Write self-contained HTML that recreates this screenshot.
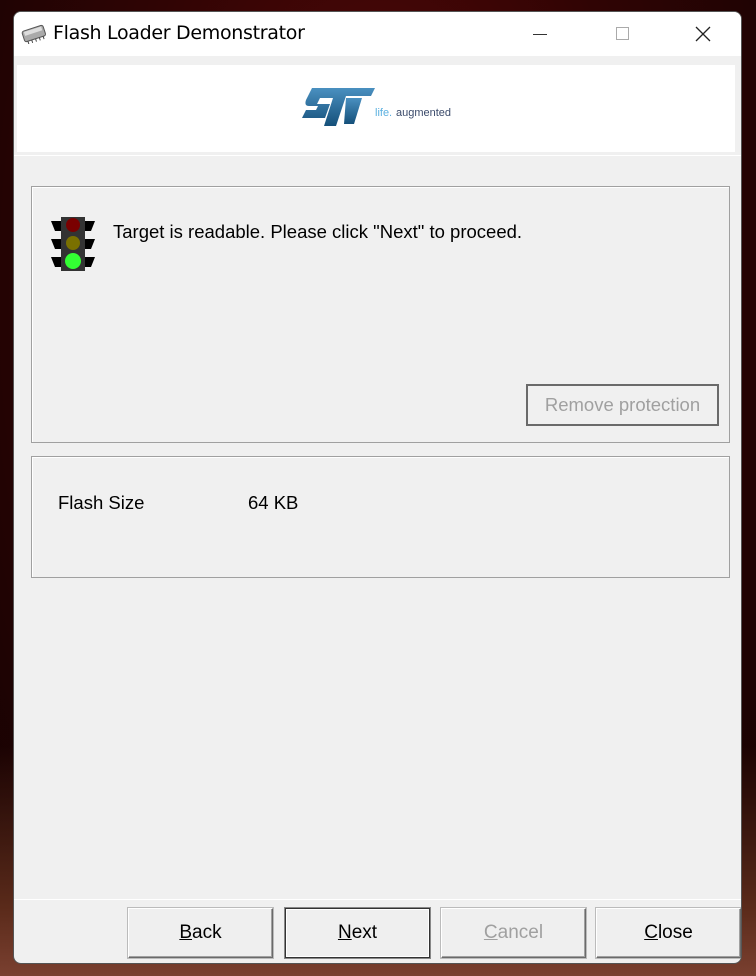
<!DOCTYPE html>
<html><head><style>
*{margin:0;padding:0;box-sizing:border-box}
body{width:756px;height:976px;overflow:hidden;position:relative;font-family:"Liberation Sans",Arial,sans-serif;
background:radial-gradient(ellipse at 50% 30%,#5a0808 0%,#300404 50%,#120202 100%);}
.bgb{position:absolute;left:0;right:0;bottom:0;height:230px;background:linear-gradient(180deg,rgba(0,0,0,0),#5a2a1a 70%,#7a4030)}
.win{position:absolute;left:13px;top:11px;width:729px;height:953px;background:#f0f0f0;border-radius:8px;border:1px solid #555;overflow:hidden}
.title{height:44px;background:#fff;position:relative;font-family:"DejaVu Sans",sans-serif;font-size:19px;color:#000}
.title span{position:absolute;left:39px;top:10px;letter-spacing:-0.3px}
.logo{position:absolute;left:3px;top:53px;width:718px;height:87px;background:#fff}
.sep{position:absolute;left:0;right:0;height:1px;background:#a0a0a0;border-bottom:1px solid #fff}
.panel{position:absolute;left:17px;width:699px;border:1px solid #a0a0a0;box-shadow:inset 1px 1px 0 #fff}
.t{position:absolute;font-size:18.5px;color:#000}
.btn{position:absolute;top:896px;width:145px;height:50px;background:#efefef;border:1px solid #fff;border-right-color:#6a6a6a;border-bottom-color:#6a6a6a;box-shadow:inset -1px -1px 0 #a0a0a0,0 0 0 1px #bbb;font-size:19px;text-align:center;line-height:48px;color:#000}
.btn u{text-decoration:underline}
</style></head><body>
<div class="bgb"></div>
<div class="win">
 <div class="title">
  <svg style="position:absolute;left:6px;top:12px" width="28" height="20" viewBox="0 0 28 20"><g transform="rotate(-18 14 10)"><rect x="3" y="4" width="22" height="11" rx="2" fill="#aaa" stroke="#555"/><rect x="5" y="5" width="18" height="4" fill="#ddd"/><g stroke="#444"><line x1="6" y1="15" x2="6" y2="18"/><line x1="10" y1="15" x2="10" y2="18"/><line x1="14" y1="15" x2="14" y2="18"/><line x1="18" y1="15" x2="18" y2="18"/><line x1="22" y1="15" x2="22" y2="18"/></g></g></svg>
  <span>Flash Loader Demonstrator</span>
  <div style="position:absolute;left:519px;top:22px;width:14px;height:1px;background:#333"></div>
  <div style="position:absolute;left:602px;top:15px;width:13px;height:13px;border:1px solid #aaa"></div>
  <svg style="position:absolute;left:681px;top:14px" width="16" height="16"><path d="M1 1L15 15M15 1L1 15" stroke="#222" stroke-width="1.3"/></svg>
 </div>
 <div class="logo">
  <svg style="position:absolute;left:283px;top:21px" width="160" height="44" viewBox="0 0 160 44">
   <defs><linearGradient id="g" x1="0" y1="0" x2="0" y2="1"><stop offset="0" stop-color="#4a90c0"/><stop offset="1" stop-color="#15507a"/></linearGradient></defs>
   <path d="M12 2H75L71 10H46L36 40H24L33 12H20L17 18H30L25 32H2L6 24H16L18 20H9Q4 20 6 14Z" fill="url(#g)"/>
   <path d="M46 12H62L54 38H44Z" fill="url(#g)"/>
   <text x="75" y="30" font-family="Liberation Sans,sans-serif" font-size="11" fill="#5bb0e0">life.</text><text x="96" y="30" font-family="Liberation Sans,sans-serif" font-size="11" fill="#3a4a6a">augmented</text>
  </svg>
 </div>
 <div class="sep" style="top:143px"></div>
 <div class="panel" style="top:174px;height:257px">
  <svg style="position:absolute;left:17px;top:28px" width="48" height="58" viewBox="0 0 48 58">
   <rect x="12" y="2" width="24" height="54" fill="#333"/>
   <path d="M2 6H12V16L6 16Z M46 6H36V16L42 16Z M2 24H12V34L6 34Z M46 24H36V34L42 34Z M2 42H12V52L6 52Z M46 42H36V52L42 52Z" fill="#000"/>
   <circle cx="24" cy="10" r="7" fill="#7a0000"/><circle cx="24" cy="28" r="7" fill="#7a7000"/><circle cx="24" cy="46" r="8" fill="#33ff33"/>
  </svg>
  <div class="t" style="left:81px;top:34px">Target is readable. Please click "Next" to proceed.</div>
  <div style="position:absolute;left:494px;top:197px;width:193px;height:42px;border:2px solid #6a6a6a;font-size:18.5px;color:#a0a0a0;text-align:center;line-height:38px">Remove protection</div>
 </div>
 <div class="panel" style="top:444px;height:122px">
  <div class="t" style="left:26px;top:35px">Flash Size</div>
  <div class="t" style="left:216px;top:35px">64 KB</div>
 </div>
 <div class="sep" style="top:887px"></div>
 <div class="btn" style="left:114px"><u>B</u>ack</div>
 <div class="btn" style="left:271px;border:1px solid #333;box-shadow:inset 0 0 0 1px #fff,0 0 0 1px #888"><u>N</u>ext</div>
 <div class="btn" style="left:427px;color:#a0a0a0"><u>C</u>ancel</div>
 <div class="btn" style="left:582px"><u>C</u>lose</div>
</div>
</body></html>
